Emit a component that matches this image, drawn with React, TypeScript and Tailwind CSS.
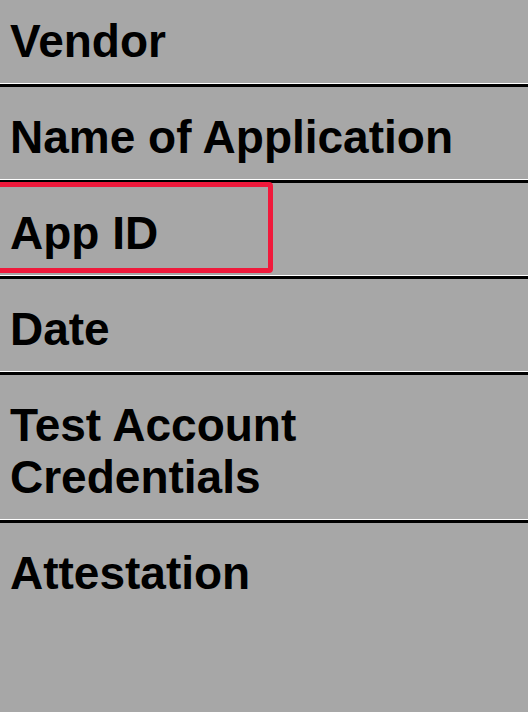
import React from "react";

const Sep = () => (
  <div className="flex flex-col">
    <div className="h-[1px] bg-white" />
    <div className="h-[3px] bg-black" />
  </div>
);

const Label = ({ children }: { children: React.ReactNode }) => (
  <div className="text-[46px] leading-[52px] font-bold text-black">{children}</div>
);

export default function App() {
  return (
    <div
      className="w-[528px] h-[712px] overflow-hidden bg-[#a7a7a7] flex flex-col"
      style={{ fontFamily: '"Liberation Sans", Arial, Helvetica, sans-serif' }}
    >
      <div className="pl-[10px] pt-[15px] pb-[16px]">
        <Label>Vendor</Label>
      </div>
      <Sep />
      <div className="pl-[10px] pt-[24px] pb-[16px]">
        <Label>Name of Application</Label>
      </div>
      <Sep />
      <div className="relative pl-[10px] pt-[24px] pb-[16px]">
        <Label>App ID</Label>
        <div className="absolute left-[-10px] top-[-1px] w-[283px] h-[91px] border-[5px] border-[#f0193b] rounded-[4px]" />
      </div>
      <Sep />
      <div className="pl-[10px] pt-[24px] pb-[16px]">
        <Label>Date</Label>
      </div>
      <Sep />
      <div className="pl-[10px] pt-[24px] pb-[16px]">
        <Label>
          Test Account
          <br />
          Credentials
        </Label>
      </div>
      <Sep />
      <div className="pl-[10px] pt-[24px] pb-[16px] flex-1">
        <Label>Attestation</Label>
      </div>
    </div>
  );
}
